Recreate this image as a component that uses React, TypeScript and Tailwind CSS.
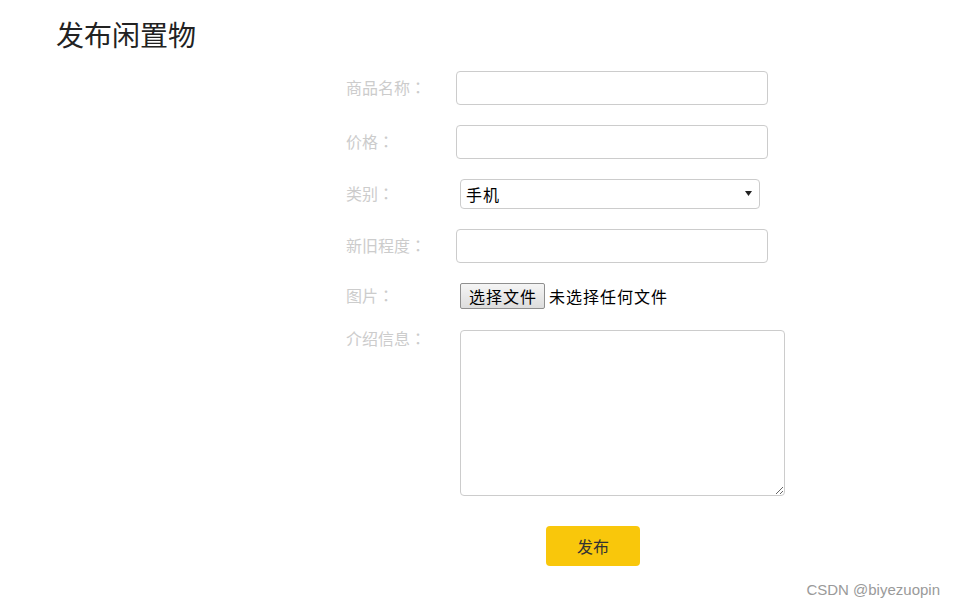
export default function App() {
  const labelCls =
    "w-[110px] shrink-0 text-[16px] leading-[20px] text-[#cccccc]";
  const inputCls =
    "w-[312px] h-[34px] rounded-[4px] border border-[#cccccc] bg-white px-2 text-[16px] outline-none";
  // full-width colon centred in its box, as in the screenshot
  const colon = (
    <span style={{ fontFamily: '"Noto Sans CJK TC", sans-serif' }}>：</span>
  );

  return (
    <div
      className="relative h-[608px] w-full bg-white text-[#222]"
      style={{ fontFamily: '"Microsoft YaHei", "Noto Sans CJK SC", sans-serif' }}
    >
      <h1 className="pl-[56px] pt-[15px] text-[28px] leading-[38px] font-normal text-[#222]">
        发布闲置物
      </h1>

      <form className="mt-[18px] pl-[346px] flex flex-col">
        <div className="flex items-center h-[34px]">
          <span className={`${labelCls} pb-[3px]`}>商品名称{colon}</span>
          <input className={inputCls} />
        </div>

        <div className="mt-[20px] flex items-center h-[34px]">
          <span className={`${labelCls} pb-[3px]`}>价格{colon}</span>
          <input className={inputCls} />
        </div>

        <div className="mt-[20px] flex items-center h-[30px]">
          <span className={`${labelCls} pb-[2px]`}>类别{colon}</span>
          <div className="relative ml-[4px] w-[300px] h-[30px]">
            <select className="h-full w-full appearance-none rounded-[4px] border border-[#cccccc] bg-white pl-[5px] text-[16px] tracking-[1px] text-black outline-none">
              <option>手机</option>
            </select>
            <svg
              className="pointer-events-none absolute right-[8px] top-[11px]"
              width="7"
              height="7"
              viewBox="0 0 7 7"
            >
              <path d="M0 1h7L3.5 6z" fill="#222" />
            </svg>
          </div>
        </div>

        <div className="mt-[20px] flex items-center h-[34px]">
          <span className={`${labelCls} pb-[3px]`}>新旧程度{colon}</span>
          <input className={inputCls} />
        </div>

        <div className="mt-[20px] flex items-center h-[26px]">
          <span className={`${labelCls} pb-[2px]`}>图片{colon}</span>
          <div className="ml-[4px] flex items-center text-[16px] tracking-[1px] text-black">
            <button
              type="button"
              className="h-[26px] pl-[8px] pr-[7px] border border-[#8f8f8f] rounded-[2px] bg-gradient-to-b from-[#f5f5f5] to-[#dddddd] text-[16px] leading-[22px] tracking-[1px] text-black"
            >
              选择文件
            </button>
            <span className="ml-[4px]">未选择任何文件</span>
          </div>
        </div>

        <div className="mt-[21px] flex items-start">
          <span className={`${labelCls} -mt-[2px]`}>介绍信息{colon}</span>
          <textarea className="ml-[4px] w-[325px] h-[166px] rounded-[4px] border border-[#cccccc] bg-white outline-none" />
        </div>

        <div className="mt-[30px] pl-[200px]">
          <button
            type="button"
            className="w-[94px] h-[40px] rounded-[4px] bg-[#f9c70b] text-[16px] text-[#333]"
          >
            发布
          </button>
        </div>
      </form>

      <div
        className="absolute right-[14px] bottom-[7px] text-[15px] text-[#9a9a9a]"
        style={{ fontFamily: '"Liberation Sans", Arial, sans-serif' }}
      >
        CSDN @biyezuopin
      </div>
    </div>
  );
}
